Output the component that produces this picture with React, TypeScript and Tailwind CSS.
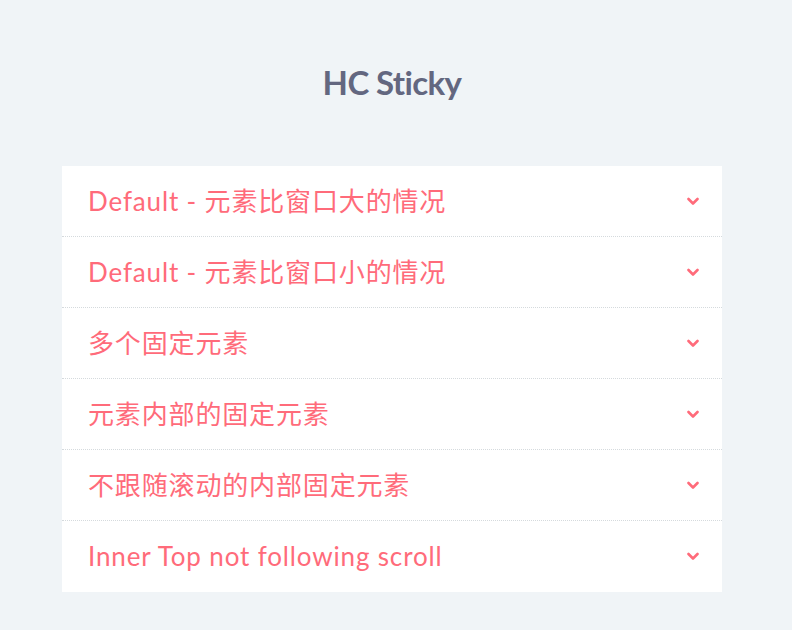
const items = [
  "Default - 元素比窗口大的情况",
  "Default - 元素比窗口小的情况",
  "多个固定元素",
  "元素内部的固定元素",
  "不跟随滚动的内部固定元素",
  "Inner Top not following scroll",
];

function Chevron() {
  return (
    <svg width="12" height="9" viewBox="0 0 12 9" className="shrink-0">
      <polyline points="1.5,2 6,6.5 10.5,2" fill="none" stroke="#ff6b7a" strokeWidth="2.6" strokeLinecap="round" strokeLinejoin="round" />
    </svg>
  );
}

export default function App() {
  return (
    <div className="min-h-[630px] bg-[#f0f4f7] pt-[62px] font-['Lato','Noto_Sans_CJK_SC',sans-serif]">
      <h1 className="pr-[8px] text-center text-[33px] font-bold text-[#636780] leading-[40px] tracking-[-0.6px]">HC Sticky</h1>
      <div className="ml-[62px] mt-[64px] w-[660px] bg-white">
        {items.map((t, i) => (
          <div
            key={i}
            className={
              "flex h-[71px] items-center justify-between pl-[26px] pr-[23px] " +
              (i < items.length - 1 ? "border-b border-dotted border-[#d5dadd]" : "h-[70px]")
            }
          >
            <span className="text-[26px] tracking-[0.85px] text-[#ff6b7a]">{t}</span>
            <Chevron />
          </div>
        ))}
      </div>
    </div>
  );
}
